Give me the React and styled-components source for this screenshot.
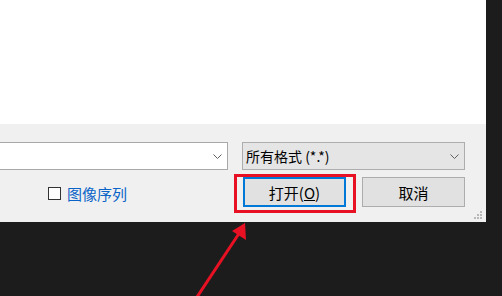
import React from "react";
import styled, { createGlobalStyle } from "styled-components";

const Global = createGlobalStyle`
  html, body { margin: 0; padding: 0; background: #1c1c1c; }
  body { width: 502px; height: 296px; overflow: hidden; font-family: "Microsoft YaHei", "Noto Sans CJK SC", "Liberation Sans", sans-serif; }
`;

const Page = styled.div`
  position: relative;
  width: 502px;
  height: 296px;
  background: #1c1c1c;
`;

const Dialog = styled.div`
  width: 486px;
  display: flex;
  flex-direction: column;
`;

const ListArea = styled.div`
  height: 124px;
  background: #ffffff;
`;

const Panel = styled.div`
  position: relative;
  height: 98px;
  background: #f0f0f0;
  box-sizing: border-box;
  padding: 18px 21px 0 0;
  display: flex;
  flex-direction: column;
  gap: 7px;
`;

const Row = styled.div`
  display: flex;
  align-items: center;
`;

const Combo = styled.div`
  box-sizing: border-box;
  height: 28px;
  width: ${(p) => p.$w}px;
  margin-left: ${(p) => p.$ml || 0}px;
  background: ${(p) => (p.$gray ? "#e5e5e5" : "#ffffff")};
  border: 1px solid ${(p) => (p.$gray ? "#adadad" : "#a9a9a9")};
  display: flex;
  align-items: center;
  padding: 0 5px 0 3px;
  font-size: 14px;
  color: #000;
`;

const ComboText = styled.span`
  flex: 1;
  white-space: nowrap;
`;

const Chevron = () => (
  <svg width="9" height="5" viewBox="0 0 9 5">
    <path d="M0.5 0.5 L4.5 4.5 L8.5 0.5" fill="none" stroke="#606060" strokeWidth="1" />
  </svg>
);

const CheckWrap = styled.label`
  display: flex;
  align-items: center;
  gap: 6px;
  margin-left: 48px;
  margin-top: 2px;
  font-size: 15px;
  color: #0a64c8;
`;

const Box = styled.span`
  box-sizing: border-box;
  width: 13px;
  height: 13px;
  border: 1px solid #333333;
  background: #ffffff;
`;

const Buttons = styled.div`
  margin-left: auto;
  display: flex;
  gap: 16px;
`;

const Btn = styled.div`
  position: relative;
  box-sizing: border-box;
  width: 103px;
  height: 30px;
  background: #e1e1e1;
  border: ${(p) => (p.$primary ? "2px solid #0078d7" : "1px solid #adadad")};
  display: flex;
  align-items: center;
  justify-content: center;
  font-size: 15px;
  color: #000;
`;

const U = styled.span`
  text-decoration: underline;
`;

const Highlight = styled.div`
  position: absolute;
  left: -11px;
  top: -5px;
  right: -12px;
  bottom: -8px;
  border: 3px solid #e81123;
  pointer-events: none;
`;

const Grip = styled.svg`
  position: absolute;
  right: 3px;
  bottom: 2px;
`;

const Arrow = styled.svg`
  position: absolute;
  left: 0;
  top: 0;
  pointer-events: none;
`;

export default function App() {
  return (
    <Page>
      <Global />
      <Dialog>
        <ListArea />
        <Panel>
          <Row>
            <Combo $w={229} $ml={-1}>
              <ComboText></ComboText>
              <Chevron />
            </Combo>
            <Combo $w={223} $ml={14} $gray>
              <ComboText>所有格式 (*.*)</ComboText>
              <Chevron />
            </Combo>
          </Row>
          <Row>
            <CheckWrap>
              <Box />
              图像序列
            </CheckWrap>
            <Buttons>
              <Btn $primary>
                打开(<U>O</U>)
                <Highlight />
              </Btn>
              <Btn>取消</Btn>
            </Buttons>
          </Row>
          <Grip width="10" height="9" viewBox="0 0 10 9">
            <rect x="7" y="0" width="2" height="2" fill="#b8b8b8" />
            <rect x="4" y="3" width="2" height="2" fill="#b8b8b8" />
            <rect x="7" y="3" width="2" height="2" fill="#b8b8b8" />
            <rect x="1" y="6" width="2" height="2" fill="#b8b8b8" />
            <rect x="4" y="6" width="2" height="2" fill="#b8b8b8" />
            <rect x="7" y="6" width="2" height="2" fill="#b8b8b8" />
          </Grip>
        </Panel>
      </Dialog>
      <Arrow width="502" height="296" viewBox="0 0 502 296">
        <line x1="197" y1="297" x2="240" y2="232" stroke="#e81123" strokeWidth="3" />
        <polygon points="245,223 246,240 232,231" fill="#e81123" />
      </Arrow>
    </Page>
  );
}
